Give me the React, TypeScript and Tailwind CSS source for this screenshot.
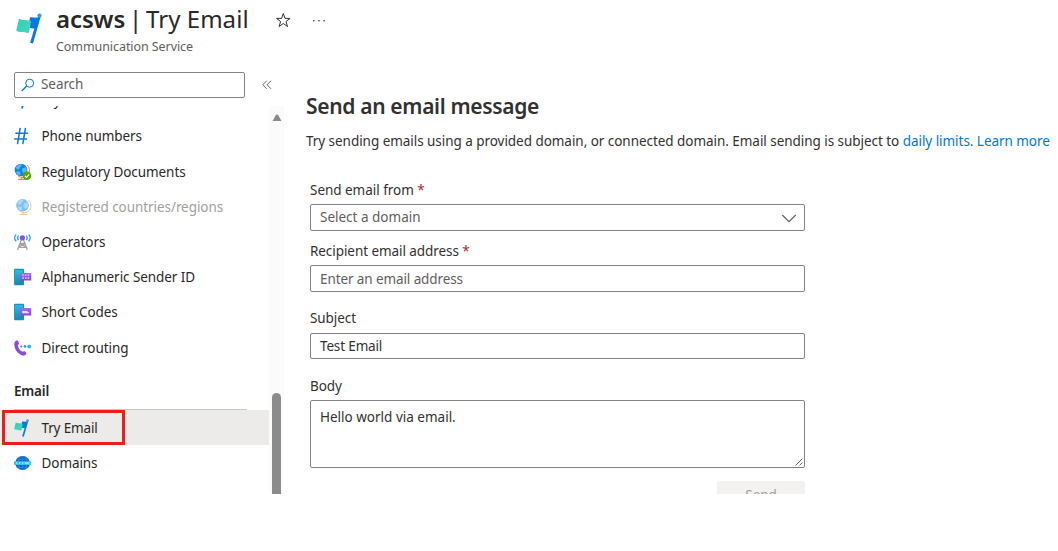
import type { ReactNode } from 'react';

function FlagIcon({ className }: { className: string }) {
  return (
    <svg viewBox="0 0 26 31" className={className}>
      <defs>
        <linearGradient id="flagTeal" x1="0" y1="0" x2="1" y2="1">
          <stop offset="0" stopColor="#2fcfae" />
          <stop offset="1" stopColor="#45d8c6" />
        </linearGradient>
      </defs>
      <path d="M14 4.300 22.800 4.700 19 15.500c-2 .2-4.500-.2-6.500-1.500z" fill="#0a78dc" />
      <path d="m22.200 2.800 2.500.8L17 30.500l-2.900-.7z" fill="#0a78dc" />
      <circle cx="23.500" cy="2.600" r="2.100" fill="#3f95e8" />
      <path d="M3 5.800c3.600 1.900 6.800.8 10.800 1.900 1 .3 1.300.8 1.100 1.700l-1.800 9.400c-.2.900-.7 1.300-1.600 1.100-3.600-1-6.800-.3-10.400-1.600-.7-.3-.8-.8-.7-1.400z" fill="url(#flagTeal)" />
    </svg>
  );
}

function HashIcon() {
  return (
    <svg viewBox="0 0 18 18" className="size-[18px]">
      <path d="M6.200.8 3.500 17.200M11.500.8 8.800 17.200M1.300 6.200h12.900M.2 11.900h12.900" stroke="#0f78cf" strokeWidth="1.500" fill="none" />
    </svg>
  );
}

function Globe() {
  return (
    <>
      <path d="M12.900 2a7 7 0 0 1-8.700 11" fill="none" stroke="#f08a3c" strokeWidth="1" />
      <path d="M7.600 14v2M4 16.300h7.800" stroke="#f08a3c" strokeWidth="1.200" fill="none" />
      <circle cx="7" cy="7" r="6.300" fill="#1482dd" />
      <path d="M1.800 4.700C3.200 2 5.700 1.100 7.500 1.300c.7 1.400-.2 2.100-1.300 2.500l-.6 1.900-2.400.7zM8.400 5.600l3.400-1.700 1.100 2.500-1.200 3.300-2 .6-1.800-2.500zM3.500 8.200l2.500.5.600 2-1.400 2c-1.500-.7-2.700-2.100-3.100-3.600z" fill="#58b9f4" />
    </>
  );
}

function GlobeIcon() {
  return (
    <svg viewBox="0 0 18 18" className="size-[18px] opacity-50">
      <g transform="translate(1.500 .2)"><Globe /></g>
    </svg>
  );
}

function GlobeCheckIcon() {
  return (
    <svg viewBox="0 0 18 18" className="size-[18px]">
      <Globe />
      <circle cx="13" cy="12.800" r="4.300" fill="#57a300" />
      <path d="m10.800 12.900 1.600 1.600 2.900-3.200" fill="none" stroke="#fff" strokeWidth="1.200" />
    </svg>
  );
}

function TowerIcon() {
  return (
    <svg viewBox="0 0 18 18" className="size-[18px]">
      <path d="M7.400 6.500 3.500 17M9.400 6.500 13.300 17M6.300 10.300h4.200l-5.600 4M6.300 10.300l5.600 4H4.900" fill="none" stroke="#a3a3a3" strokeWidth="1.300" />
      <circle cx="8.400" cy="4.800" r="2.600" fill="#8a4fe0" />
      <path d="M4.500 2.600c-1.100 1.300-1.100 3.200 0 4.500M12.300 2.600c1.100 1.300 1.100 3.200 0 4.500" fill="none" stroke="#28a9dc" strokeWidth="1.300" />
      <path d="M2.200 1.400C.1 3.300.1 6.400 2.200 8.300M14.600 1.400c2.100 1.900 2.100 5 0 6.900" fill="none" stroke="#28a9dc" strokeWidth="1.300" />
    </svg>
  );
}

function PhoneMessageIcon({ keypad }: { keypad?: boolean }) {
  return (
    <svg viewBox="0 0 18 18" className="size-[18px]">
      <defs>
        <linearGradient id="phoneBlue" x1="0" y1="0" x2="0" y2="1">
          <stop offset="0" stopColor="#30b9dc" />
          <stop offset="1" stopColor="#188bb0" />
        </linearGradient>
        <linearGradient id="bubblePurple" x1="0" y1="0" x2="0" y2="1">
          <stop offset="0" stopColor="#a56cf0" />
          <stop offset="1" stopColor="#7d3ed5" />
        </linearGradient>
      </defs>
      <rect x=".1" y=".8" width="9.900" height="16.500" rx=".8" fill="#168fb4" />
      <rect x="1" y="1.900" width="8" height="14" fill="url(#phoneBlue)" />
      <path d="M6.400 4.900h10.800v7.600H9.200L6.700 14.500z" fill="url(#bubblePurple)" />
      {keypad ? (
        <path d="M8.300 7.200h1.500M11 7.200h1.500M13.700 7.200h1.500M8.300 10h1.500M11 10h1.500M13.700 10h1.500" stroke="#e4d3ff" strokeWidth="1.300" />
      ) : (
        <path d="M8.200 8h4.600l2.200 1.500v.8H8.200z" fill="#eadcff" />
      )}
    </svg>
  );
}

function RoutingIcon() {
  return (
    <svg viewBox="0 0 18 18" className="size-[18px]">
      <path d="M2.800 1.200 4.200 2l.9 2.700-1.300 1.500c.4 2.900 2.200 5.400 4.800 6.600l1.700-.7 2 1.700-.2 1.500c-1 1.300-2.700 1.700-4.300 1C3.500 14.300.3 10.300.3 5.300c0-1.900.8-3.500 2.500-4.100z" fill="#8a4ce0" />
      <circle cx="7.200" cy="7.500" r="1.100" fill="#6b7be4" />
      <circle cx="11" cy="7.500" r="1.400" fill="#35a5dc" />
      <circle cx="15.200" cy="7.500" r="2" fill="#32bfe0" />
    </svg>
  );
}

function DomainsIcon() {
  return (
    <svg viewBox="0 0 18 18" className="size-[18px]">
      <ellipse cx="8.600" cy="9" rx="7.300" ry="7" fill="#0b6abf" />
      <path d="M8.600 2v14M2.400 5.200h12.400M2.400 13.200h12.400M6.500 2.300c-3.100 4.300-3.100 9.200 0 13.400M10.700 2.300c3.100 4.300 3.100 9.200 0 13.400" fill="none" stroke="#328de0" strokeWidth=".7" />
      <rect x="0" y="7.200" width="17.200" height="3.700" rx=".8" fill="#35c1ea" />
      <path d="M2 9h1.300M5 9h1.300M8 9h1.300M10.800 9h4.500" stroke="#e9fbff" strokeWidth="1.100" />
    </svg>
  );
}

function NavRow({ icon, label, disabled }: { icon: ReactNode; label: string; disabled?: boolean }) {
  return (
    <div className="flex h-[35.200px] shrink-0 items-center pl-[14px]">
      <span className="flex w-[27.500px] shrink-0">{icon}</span>
      <span className={disabled ? 'text-[#a19f9d]' : ''}>{label}</span>
    </div>
  );
}

export default function App() {
  return (
    <div className="h-[551px] w-[1058px] overflow-hidden bg-white font-['Noto_Sans','Open_Sans',sans-serif] text-[13.500px] leading-[20px] tracking-[-0.070px] whitespace-nowrap text-[#323130]">
      <header className="flex h-[72px] pl-[16px]">
        <FlagIcon className="mt-[13px] h-[31px] w-[26px]" />
        <div className="ml-[14px] w-[219px]">
          <h1 className="mt-[3px] flex text-[24px] leading-[32px] text-[#292827]">
            <span className="w-[73px] font-semibold tracking-[-0.100px]">acsws</span>
            <span className="w-[17px]">|</span>
            <span className="tracking-[0.050px]">Try Email</span>
          </h1>
          <p className="mt-[3px] text-[12.500px] leading-[18px] tracking-[-0.070px] text-[#605e5c]">Communication Service</p>
        </div>
        <svg viewBox="0 0 16 16" className="mt-[12px] size-[16px]">
          <path d="m8.300 1.500 1.700 4.900h5.100l-4.100 3.100 1.500 5-4.200-3-4.200 3 1.500-5-4.100-3.100h5.100z" fill="none" stroke="#323130" strokeWidth="1" />
        </svg>
        <svg viewBox="0 0 14 4" className="mt-[19px] ml-[21px] h-[4px] w-[14px]">
          <path d="M1 1h1.500v1.500H1zM6.200 1h1.500v1.500H6.200zM11.400 1h1.500v1.500h-1.500z" fill="#605e5c" />
        </svg>
      </header>
      <div className="flex h-[422px] overflow-hidden">
        <aside className="flex w-[284px] flex-col">
          <div className="flex h-[34px] shrink-0">
            <div className="ml-[14px] flex h-[26px] w-[231px] items-center rounded-[2px] border border-[#858381] text-[#605e5c]">
              <svg viewBox="0 0 14 14" className="ml-[6px] size-[14px]">
                <circle cx="8.700" cy="5.200" r="4" fill="none" stroke="#0078d4" />
                <path d="M5.700 8 .7 13" stroke="#0078d4" strokeWidth="1.200" />
              </svg>
              <span className="ml-[6px] pb-[2px]">Search</span>
            </div>
            <svg viewBox="0 0 10 10" className="mt-[8px] ml-[17px] size-[10px]">
              <path d="M4.700.8.800 4.800l3.900 4M9 .8 5.100 4.800 9 8.800" fill="none" stroke="#605e5c" strokeWidth=".9" />
            </svg>
          </div>
          <div className="flex h-[388px] overflow-hidden">
            <nav className="flex h-[388px] w-[269px] flex-col overflow-hidden text-[#292827]">
              <div className="-mt-[23.400px] h-[283px] shrink-0">
                <NavRow icon={<FlagIcon className="-ml-px h-[18px] w-[15px]" />} label="Try SMS" />
                <div className="h-[.700px]" />
                <NavRow icon={<HashIcon />} label="Phone numbers" />
                <div className="h-[.400px]" />
                <NavRow icon={<GlobeCheckIcon />} label="Regulatory Documents" />
                <NavRow icon={<GlobeIcon />} label="Registered countries/regions" disabled />
                <NavRow icon={<TowerIcon />} label="Operators" />
                <NavRow icon={<PhoneMessageIcon keypad />} label="Alphanumeric Sender ID" />
                <div className="-mt-[.200px]" />
                <NavRow icon={<PhoneMessageIcon />} label="Short Codes" />
                <div className="h-[.500px]" />
                <NavRow icon={<RoutingIcon />} label="Direct routing" />
              </div>
              <div className="mr-[22px] ml-[14px] flex h-[44.600px] shrink-0 items-end border-b border-[#c8c6c4] pb-[8px] font-semibold tracking-[-0.200px]">Email</div>
              <div className="flex h-[35px] shrink-0 bg-[#edebe9]">
                <div className="ml-[2px] flex h-[35px] w-[123px] items-center border-3 border-[#ed1c24] pl-[9px]">
                  <span className="flex w-[27.500px] shrink-0"><FlagIcon className="h-[18px] w-[15px]" /></span>
                  <span className="tracking-[-0.150px]">Try Email</span>
                </div>
              </div>
              <NavRow icon={<DomainsIcon />} label="Domains" />
            </nav>
            <div className="flex w-[15px] flex-col items-center bg-[#fbfbfb]">
              <svg viewBox="0 0 10 8" className="mt-[8px] h-[8px] w-[10px] shrink-0">
                <path d="M4 .8h2L9.500 7H.5z" fill="#8a8a8a" />
              </svg>
              <div className="mt-[271px] h-[110px] w-[9px] shrink-0 rounded-t-full bg-[#8b8b8b]" />
            </div>
          </div>
        </aside>
        <main className="ml-[22px] w-[752px] shrink-0">
          <h2 className="mt-[20px] text-[21px] leading-[28px] font-semibold tracking-[-0.330px]">Send an email message</h2>
          <p className="mt-[11px] tracking-[-0.045px]">
            Try sending emails using a provided domain, or connected domain. Email sending is subject to{' '}
            <a className="text-[#0078d4]">daily limits.</a> <a className="text-[#0078d4]">Learn more</a>
          </p>
          <form className="ml-[4px] w-[495px]">
            <label className="mt-[29px] block tracking-[-0.030px]">Send email from <span className="text-[#a4262c]">*</span></label>
            <div className="mt-[4px] flex h-[27px] items-center justify-between rounded-[2px] border border-[#858381] pr-[7px] pl-[9px] text-[#605e5c]">
              <span className="pb-[2px] tracking-normal">Select a domain</span>
              <svg viewBox="0 0 16 9" className="mt-[2px] h-[9px] w-[16px]">
                <path d="m1.300 1 6.700 6.700L14.700 1" fill="none" stroke="#605e5c" strokeWidth="1.100" />
              </svg>
            </div>
            <label className="mt-[10px] block">Recipient email address <span className="text-[#a4262c]">*</span></label>
            <div className="mt-[4px] flex h-[27px] items-center rounded-[2px] border border-[#858381] pl-[9px] tracking-[-0.100px] text-[#605e5c]">Enter an email address</div>
            <label className="mt-[16px] block">Subject</label>
            <div className="mt-[5px] flex h-[26px] items-center rounded-[2px] border border-[#858381] pl-[9px] tracking-[-0.150px]">Test Email</div>
            <label className="mt-[17px] block">Body</label>
            <div className="mt-[4px] flex h-[68px] items-end justify-between rounded-[2px] border border-[#858381] pr-px pb-px pl-[9px]">
              <span className="mt-[6px] self-start tracking-normal">Hello world via email.</span>
              <svg viewBox="0 0 8 8" className="size-[8px]">
                <path d="M.5 7.500l7-7M4.500 7.500l3-3" stroke="#555" strokeWidth=".9" />
              </svg>
            </div>
            <div className="mt-[13px] ml-auto h-[32px] w-[88px] rounded-[2px] bg-[#f3f2f1] pt-[4px] text-center text-[#a19f9d]">Send</div>
          </form>
        </main>
      </div>
    </div>
  );
}
